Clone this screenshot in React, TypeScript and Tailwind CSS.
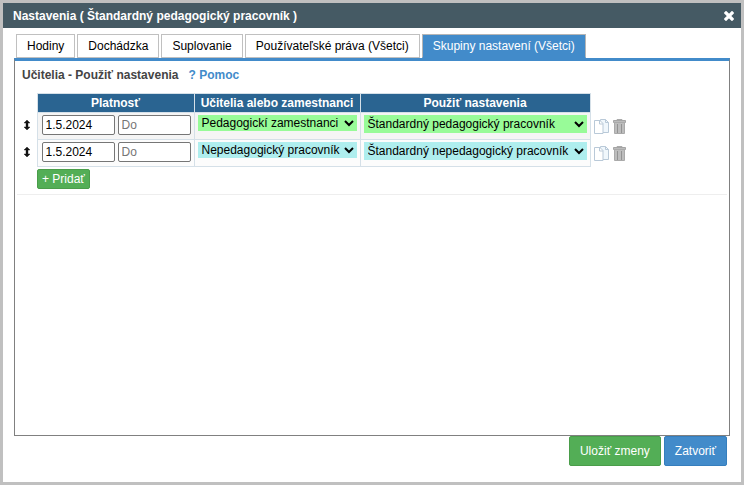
import { useState } from 'react'

const tabs = ['Hodiny', 'Dochádzka', 'Suplovanie', 'Používateľské práva (Všetci)', 'Skupiny nastavení (Všetci)']

const groups = ['Pedagogickí zamestnanci', 'Nepedagogický pracovník']
const presets = ['Štandardný pedagogický pracovník', 'Štandardný nepedagogický pracovník']

const rows = [
  { from: '1.5.2024', group: groups[0], preset: presets[0], rowBg: 'bg-[#f5f5f5]', selectBg: 'bg-[#98fb98]' },
  { from: '1.5.2024', group: groups[1], preset: presets[1], rowBg: 'bg-[#fcfcfc]', selectBg: 'bg-[#afeeee]' },
]

function CloseIcon() {
  return (
    <svg width="10" height="10" viewBox="0 0 10 10" aria-hidden="true">
      <path d="M2 2l6 6M8 2l-6 6" stroke="#fff" strokeWidth="3.2" strokeLinecap="square" />
    </svg>
  )
}

function MoveIcon() {
  return (
    <svg width="6" height="10" viewBox="0 0 6 10" className="ml-auto" aria-hidden="true">
      <path d="M3 0l3 3H4v4h2L3 10 0 7h2V3H0z" fill="#111" stroke="#111" strokeWidth="0.4" />
    </svg>
  )
}

function CopyIcon() {
  return (
    <svg width="15" height="15" viewBox="0 0 15 15" aria-hidden="true">
      <path d="M6.500.5h5l3 3v10h-8z" fill="#f0f7fc" stroke="#b9c9d8" />
      <path d="M11.500.5v3h3" fill="none" stroke="#b9c9d8" />
      <path d="M.5 1.500h5.500l3 3v10H.5z" fill="#fff" stroke="#b9c9d8" />
      <path d="M5.500 1.500v3.500h3.500" fill="none" stroke="#b9c9d8" />
    </svg>
  )
}

function TrashIcon() {
  return (
    <svg width="13" height="15" viewBox="0 0 13 15" aria-hidden="true">
      <path d="M4 1.500V.5h5v1" fill="none" stroke="#aaa" />
      <path d="M.5 1.500h12v2H.5z" fill="#bbb" stroke="#a5a5a5" />
      <path d="M1.500 3.500h10v11h-10z" fill="#bdbdbd" stroke="#aaa" />
      <path d="M4.500 5v9M8.500 5v9" stroke="#939393" />
    </svg>
  )
}

export default function App() {
  const [active, setActive] = useState(4)

  return (
    <div className="flex min-h-screen flex-col border-3 border-[#c0c0c0] bg-white font-['Liberation_Sans',Arial,sans-serif] text-[12px] leading-4 text-black">
      <header className="flex h-[25px] items-center justify-between bg-[#455a64] pr-[7px] pl-[10px] font-bold text-white">
        <h1>Nastavenia ( Štandardný pedagogický pracovník )</h1>
        <button type="button" aria-label="Zavrieť">
          <CloseIcon />
        </button>
      </header>

      <div className="flex flex-1 flex-col px-[11px] pt-[6px] pb-4">
        <nav className="flex gap-[2px] px-[2px]">
          {tabs.map((tab, i) => (
            <button
              key={tab}
              type="button"
              onClick={() => setActive(i)}
              className={
                i === active
                  ? 'h-6 border border-[#b5b5b5] border-b-[#428bca] bg-[#428bca] px-[10px] text-white'
                  : 'h-6 border border-[#c0c0c0] bg-white px-[10px]'
              }
            >
              {tab}
            </button>
          ))}
        </nav>

        <main className="flex-1 border border-t-3 border-[#808080] border-t-[#428bca]">
          <div className="flex gap-[10px] px-[7px] pt-[6px] font-bold">
            <h2 className="text-[#444]">Učitelia - Použiť nastavenia</h2>
            <a href="#pomoc" className="text-[#428bca]">? Pomoc</a>
          </div>

          <table className="mt-[10px] border-collapse">
            <thead>
              <tr className="h-[19px] text-white">
                <td className="w-[22px]" />
                <th className="w-[157px] border border-[#d5e0e8] bg-[#2a6491]">Platnosť</th>
                <th className="w-[166px] border border-[#d5e0e8] bg-[#2a6491]">Učitelia alebo zamestnanci</th>
                <th className="w-[230px] border border-[#d5e0e8] bg-[#2a6491]">Použiť nastavenia</th>
                <td />
              </tr>
            </thead>
            <tbody>
              {rows.map((row, i) => (
                <tr key={i} className="h-[27px] align-top">
                  <td className="pt-[7px] pr-[7px]">
                    <MoveIcon />
                  </td>
                  <td className={`border border-[#d5e0e8] pt-[2px] pr-[2px] pl-1 ${row.rowBg}`}>
                    <div className="flex gap-[3px]">
                      <input
                        aria-label="Od"
                        defaultValue={row.from}
                        className="h-5 w-[73px] rounded-xs border border-[#767676] bg-white px-[3px]"
                      />
                      <input
                        aria-label="Do"
                        placeholder="Do"
                        className="h-5 w-[73px] rounded-xs border border-[#767676] bg-white px-[3px] placeholder:text-[#757575]"
                      />
                    </div>
                  </td>
                  <td className={`border border-[#d5e0e8] px-[3px] pt-[2px] ${row.rowBg}`}>
                    <select
                      aria-label="Učitelia alebo zamestnanci"
                      defaultValue={row.group}
                      className={`block h-4 w-full ${row.selectBg}`}
                    >
                      {groups.map(g => <option key={g}>{g}</option>)}
                    </select>
                  </td>
                  <td className={`border border-[#d5e0e8] px-[3px] pt-[2px] ${row.rowBg}`}>
                    <select
                      aria-label="Použiť nastavenia"
                      defaultValue={row.preset}
                      className={`block h-[18px] w-full ${row.selectBg}`}
                    >
                      {presets.map(p => <option key={p}>{p}</option>)}
                    </select>
                  </td>
                  <td className="pt-[6px] pl-[3px]">
                    <div className="flex gap-1">
                      <button type="button" aria-label="Kopírovať">
                        <CopyIcon />
                      </button>
                      <button type="button" aria-label="Vymazať">
                        <TrashIcon />
                      </button>
                    </div>
                  </td>
                </tr>
              ))}
            </tbody>
          </table>

          <button
            type="button"
            className="mt-[2px] ml-[22px] block h-5 rounded-xs border border-[#4a9d4a] bg-[#53ae56] px-1 text-white"
          >
            + Pridať
          </button>
          <hr className="mx-[2px] mt-[5px] border-[#eee]" />
        </main>

        <footer className="flex justify-end gap-[3px] pr-[3px]">
          <button type="button" className="h-[30px] rounded-xs border border-[#4a9d4a] bg-[#53ae56] px-[10px] text-white">
            Uložiť zmeny
          </button>
          <button type="button" className="h-[30px] rounded-xs border border-[#357ebd] bg-[#428bca] px-[10px] text-white">
            Zatvoriť
          </button>
        </footer>
      </div>
    </div>
  )
}
